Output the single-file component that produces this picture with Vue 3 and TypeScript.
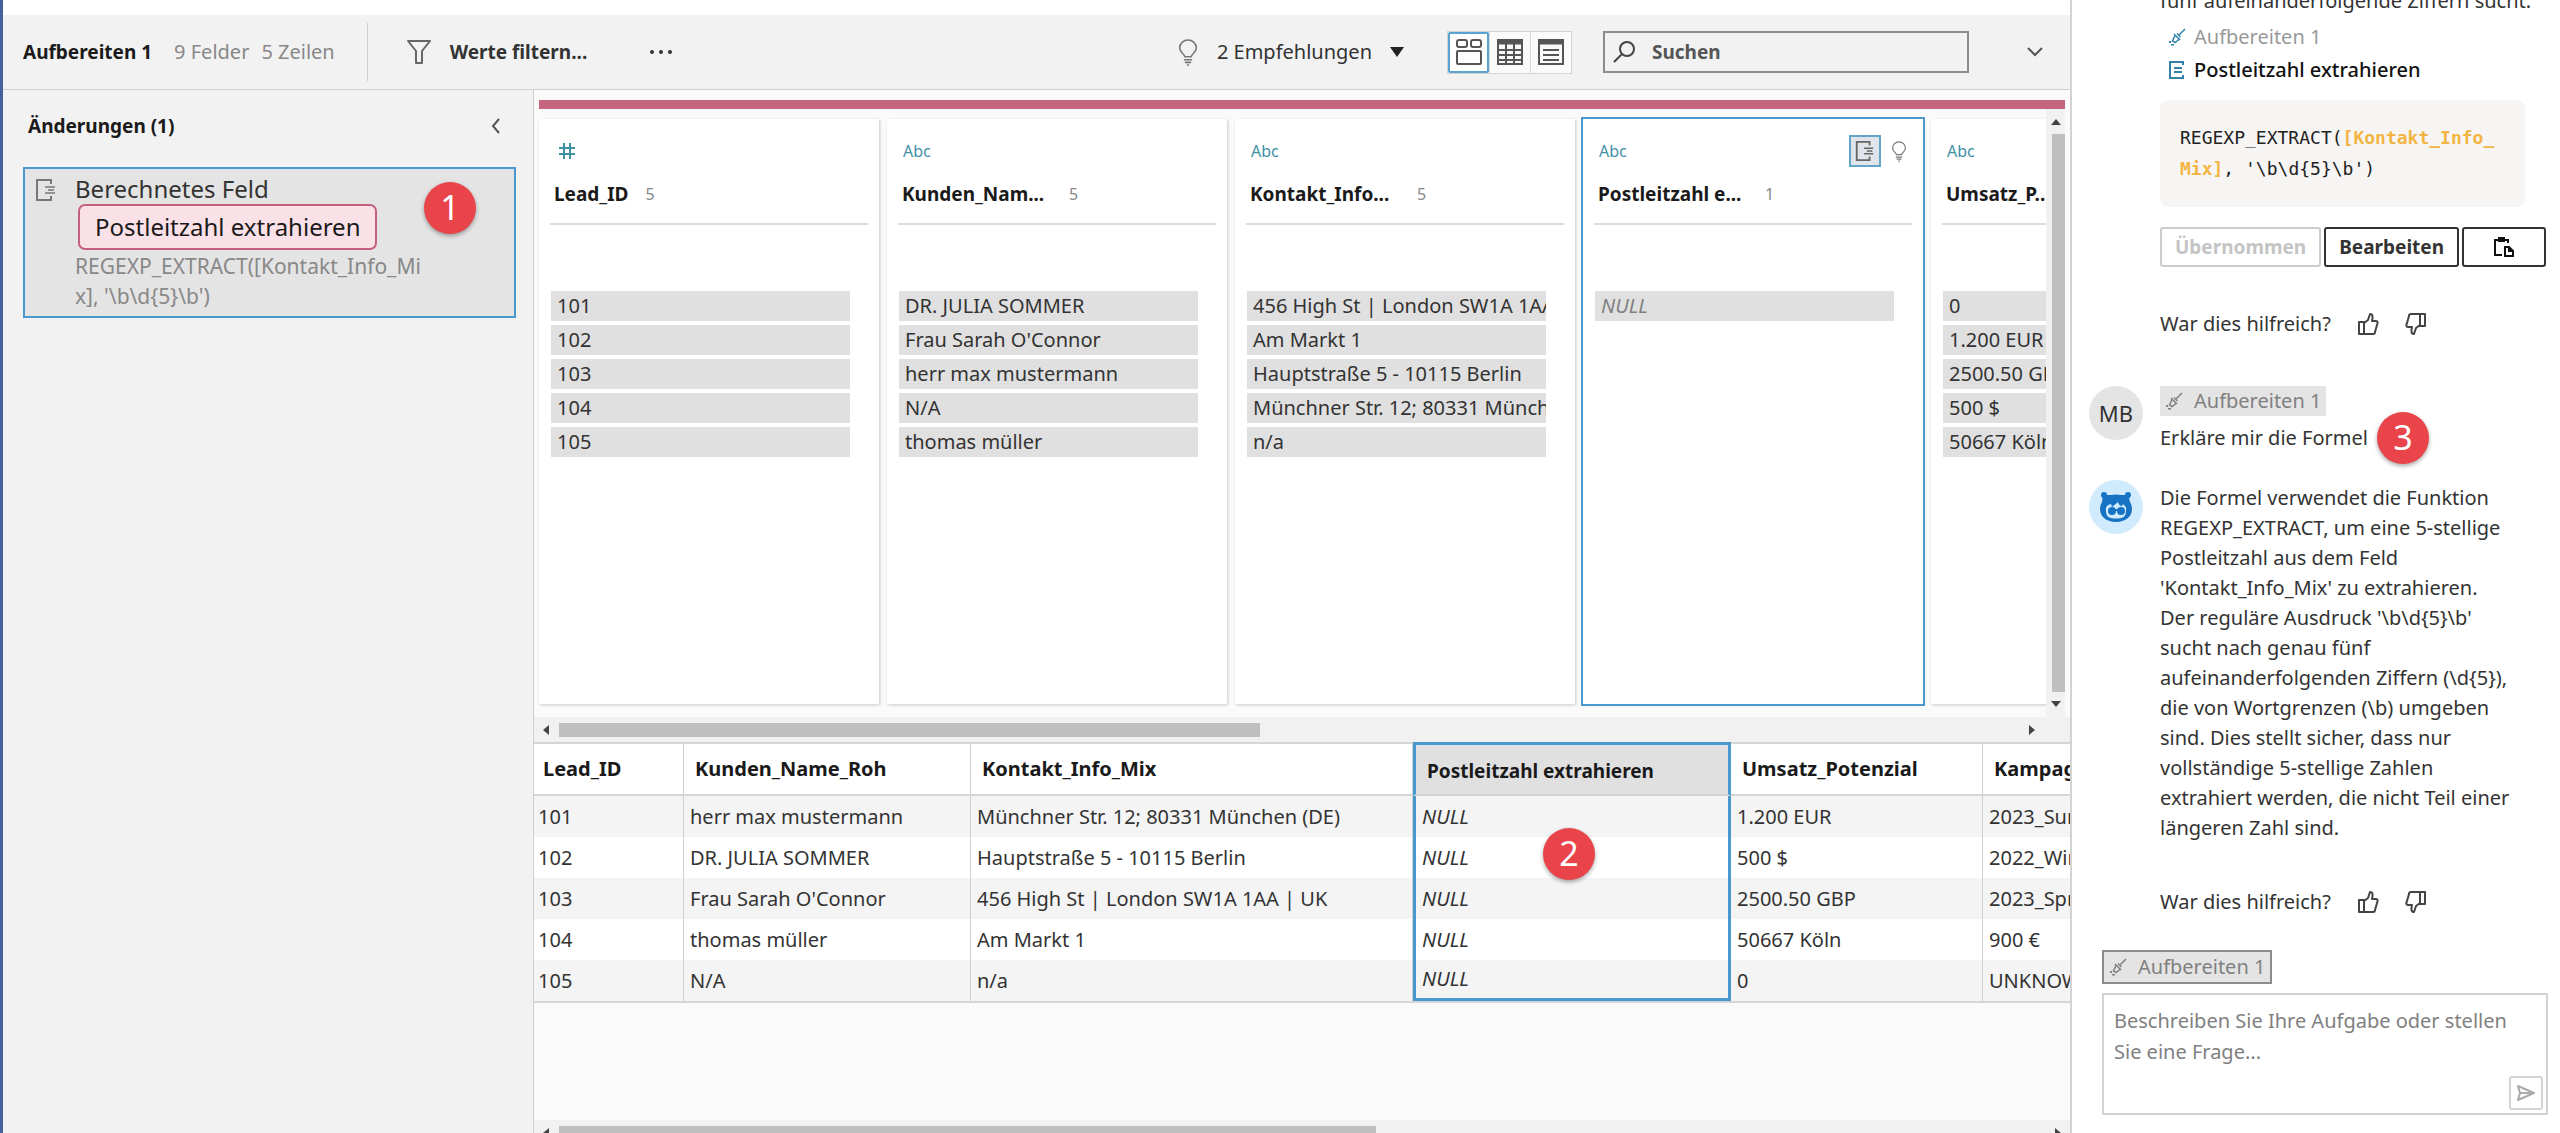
<script setup lang="ts">
interface Profile {
  title: string
  type: 'number' | 'text'
  count: number
  values: string[]
  selected?: boolean
}

const profiles: Profile[] = [
  { title: 'Lead_ID', type: 'number', count: 5, values: ['101', '102', '103', '104', '105'] },
  {
    title: 'Kunden_Nam...',
    type: 'text',
    count: 5,
    values: ['DR. JULIA SOMMER', "Frau Sarah O'Connor", 'herr max mustermann', 'N/A', 'thomas müller'],
  },
  {
    title: 'Kontakt_Info...',
    type: 'text',
    count: 5,
    values: [
      '456 High St | London SW1A 1AA | UK',
      'Am Markt 1',
      'Hauptstraße 5 - 10115 Berlin',
      'Münchner Str. 12; 80331 München (DE)',
      'n/a',
    ],
  },
  { title: 'Postleitzahl e...', type: 'text', count: 1, values: ['NULL'], selected: true },
  { title: 'Umsatz_P...', type: 'text', count: 5, values: ['0', '1.200 EUR', '2500.50 GBP', '500 $', '50667 Köln'] },
]

const columns: string[] = [
  'Lead_ID',
  'Kunden_Name_Roh',
  'Kontakt_Info_Mix',
  'Postleitzahl extrahieren',
  'Umsatz_Potenzial',
  'Kampagne_ID',
]

const selectedColumn = 3

const rows: string[][] = [
  ['101', 'herr max mustermann', 'Münchner Str. 12; 80331 München (DE)', 'NULL', '1.200 EUR', '2023_Summer'],
  ['102', 'DR. JULIA SOMMER', 'Hauptstraße 5 - 10115 Berlin', 'NULL', '500 $', '2022_Winter'],
  ['103', "Frau Sarah O'Connor", '456 High St | London SW1A 1AA | UK', 'NULL', '2500.50 GBP', '2023_Spring'],
  ['104', 'thomas müller', 'Am Markt 1', 'NULL', '50667 Köln', '900 €'],
  ['105', 'N/A', 'n/a', 'NULL', '0', 'UNKNOWN'],
]
</script>

<template>
  <div class="app">
    <svg class="sprite" aria-hidden="true">
      <symbol id="i-calc" viewBox="0 0 24 24">
        <path d="M17 6V2H3v20h14v-4" fill="none" stroke="currentColor" stroke-width="2" />
        <path d="M11 9h10M14 12h6M11 15h10" fill="none" stroke="currentColor" stroke-width="1.500" />
      </symbol>
      <symbol id="i-field" viewBox="0 0 16 18">
        <path d="M15 4V1H2v16h13v-3M6 7h8M6 11h8" fill="none" stroke="currentColor" stroke-width="2" />
      </symbol>
      <symbol id="i-brush" viewBox="0 0 18 18">
        <path d="M17 1l-6 6M6 6l6 6M7 7.500l-2.500 5.500 2.500 1.500 4-3" fill="none" stroke="currentColor" stroke-width="1.500" />
        <path d="M9 5.500l3.500 3.500" stroke="currentColor" stroke-width="1.500" />
        <path d="M1 13h2v2H1zM3 16h3v1.500H3z" fill="currentColor" />
      </symbol>
      <symbol id="i-bulb" viewBox="0 0 20 26">
        <path d="M7 17C6 14 2 13 2 8.500a8 7.500 0 0 1 16 0C18 13 14 14 13 17z" fill="none" stroke="currentColor" stroke-width="1.500" />
        <path d="M6 20h8M7 22.500h6M9 25h2" fill="none" stroke="currentColor" stroke-width="1.500" />
      </symbol>
      <symbol id="i-thumb" viewBox="0 0 22 22">
        <path
          d="M2 9h5v12H2zM7 10l4-3 2-6c3 0 3 3 2 7h4c2 0 2 2 1 4l-2 7c0 1-1 2-2 2H7"
          fill="none"
          stroke="currentColor"
          stroke-width="2"
          stroke-linejoin="round"
        />
      </symbol>
    </svg>

    <main class="workspace">
      <header class="toolbar">
        <div class="summary">
          <strong>Aufbereiten 1</strong>
          <span>9 Felder</span>
          <span>5 Zeilen</span>
        </div>
        <button class="plain filter" type="button">
          <svg width="26" height="26" viewBox="0 0 26 26"><path d="M2 2h22L16 12v12h-6V12z" fill="none" stroke="#666" stroke-width="2" stroke-linejoin="round" /></svg>
          Werte filtern...
        </button>
        <button class="plain more" type="button" aria-label="Mehr">
          <svg width="24" height="6" viewBox="0 0 24 6" fill="#333"><circle cx="3" cy="3" r="2" /><circle cx="12" cy="3" r="2" /><circle cx="21" cy="3" r="2" /></svg>
        </button>
        <button class="plain hints" type="button">
          <svg class="grey" width="22" height="27"><use href="#i-bulb" /></svg>
          2 Empfehlungen
          <svg class="caret" width="14" height="10" viewBox="0 0 14 10"><path d="M0 0h14L7 10z" fill="#222" /></svg>
        </button>
        <div class="views">
          <button type="button" class="active" aria-label="Profil">
            <svg width="28" height="28" viewBox="0 0 28 28" fill="none" stroke="#555" stroke-width="2"><rect x="2" y="2" width="10" height="7" rx="2" /><rect x="16" y="2" width="10" height="7" rx="2" /><rect x="2" y="13" width="24" height="13" rx="1" /></svg>
          </button>
          <button type="button" aria-label="Raster">
            <svg width="28" height="28" viewBox="0 0 28 28" fill="none" stroke="#555" stroke-width="2"><path d="M2 2h24v24H2zM2 12h24M2 17h24M2 22h24M10 5v21M18 5v21" /><path d="M2 4h24" stroke-width="5" /></svg>
          </button>
          <button type="button" aria-label="Liste">
            <svg width="28" height="28" viewBox="0 0 28 28" fill="none" stroke="#555" stroke-width="2"><path d="M2 2h24v24H2zM6 12h16M6 17h16M6 22h16" /><path d="M2 4h24" stroke-width="5" /></svg>
          </button>
        </div>
        <label class="search">
          <svg width="24" height="24" viewBox="0 0 24 24" fill="none" stroke="#444" stroke-width="2"><circle cx="15" cy="9" r="7" /><path d="M10 14l-8 8" /></svg>
          <input type="search" placeholder="Suchen" aria-label="Suchen" />
        </label>
        <button class="plain collapse" type="button" aria-label="Einklappen">
          <svg width="16" height="10" viewBox="0 0 16 10"><path d="M1 1l7 7 7-7" fill="none" stroke="#555" stroke-width="2" /></svg>
        </button>
      </header>

      <div class="body">
        <aside class="changes">
          <div class="changes-head">
            <h2>Änderungen (1)</h2>
            <button class="plain" type="button" aria-label="Bereich schließen">
              <svg width="10" height="16" viewBox="0 0 10 16"><path d="M8 1L2 8l6 7" fill="none" stroke="#555" stroke-width="2" /></svg>
            </button>
          </div>
          <article class="change">
            <svg class="grey" width="24" height="24"><use href="#i-calc" /></svg>
            <div class="change-text">
              <div class="change-kind">Berechnetes Feld</div>
              <span class="chip">Postleitzahl extrahieren</span>
              <div class="formula">REGEXP_EXTRACT([Kontakt_Info_Mix], '\b\d{5}\b')</div>
            </div>
            <span class="marker marker-one">1</span>
          </article>
        </aside>

        <section class="data">
          <div class="step-bar"></div>
          <div class="profile-pane">
            <div class="cards">
              <article v-for="p in profiles" :key="p.title" class="card" :class="{ selected: p.selected }">
                <div class="card-type">
                  <svg v-if="p.type === 'number'" class="hash" width="18" height="18" viewBox="0 0 18 18"><path d="M6 1v16M12 1v16M1 6h16M1 12h16" fill="none" stroke="#3f8fa6" stroke-width="2" /></svg>
                  <span v-else>Abc</span>
                  <span v-if="p.selected" class="card-tools">
                    <button type="button" class="calc-button" aria-label="Berechnung anzeigen"><svg width="22" height="22"><use href="#i-calc" /></svg></button>
                    <svg class="grey" width="16" height="21"><use href="#i-bulb" /></svg>
                  </span>
                </div>
                <div class="card-title">
                  <h3 :class="{ wide: p.type === 'text' }">{{ p.title }}</h3>
                  <span>{{ p.count }}</span>
                </div>
                <ul>
                  <li v-for="v in p.values" :key="v" :class="{ empty: v === 'NULL' }">{{ v }}</li>
                </ul>
              </article>
            </div>
            <div class="v-scroll">
              <svg width="10" height="6" viewBox="0 0 10 6"><path d="M0 6h10L5 0z" fill="#444" /></svg>
              <div class="v-thumb"></div>
              <svg width="10" height="6" viewBox="0 0 10 6"><path d="M0 0h10L5 6z" fill="#444" /></svg>
            </div>
          </div>
          <div class="h-scroll">
            <svg width="6" height="10" viewBox="0 0 6 10"><path d="M6 0v10L0 5z" fill="#444" /></svg>
            <div class="h-track"><div class="h-thumb"></div></div>
            <svg width="6" height="10" viewBox="0 0 6 10"><path d="M0 0v10l6-5z" fill="#444" /></svg>
          </div>

          <div class="table-pane">
            <table>
              <colgroup>
                <col class="c-id" /><col class="c-name" /><col class="c-contact" /><col class="c-zip" /><col class="c-value" /><col class="c-campaign" />
              </colgroup>
              <thead>
                <tr>
                  <th v-for="(c, i) in columns" :key="c" scope="col" :class="{ picked: i === selectedColumn }">{{ c }}</th>
                </tr>
              </thead>
              <tbody>
                <tr v-for="r in rows" :key="r[0]">
                  <td v-for="(v, i) in r" :key="i" :class="{ picked: i === selectedColumn }">{{ v }}</td>
                </tr>
              </tbody>
            </table>
            <span class="marker marker-two">2</span>
          </div>
          <div class="h-scroll bottom">
            <svg width="6" height="10" viewBox="0 0 6 10"><path d="M6 0v10L0 5z" fill="#444" /></svg>
            <div class="h-track"><div class="h-thumb"></div></div>
            <svg width="6" height="10" viewBox="0 0 6 10"><path d="M0 0v10l6-5z" fill="#444" /></svg>
          </div>
        </section>
      </div>
    </main>

    <aside class="chat">
      <div class="messages">
        <div class="answer">
          <p class="tail">fünf aufeinanderfolgende Ziffern sucht.</p>
          <div class="ref-line muted"><svg class="blue" width="18" height="18"><use href="#i-brush" /></svg>Aufbereiten 1</div>
          <div class="ref-line strong"><svg class="blue" width="16" height="18"><use href="#i-field" /></svg>Postleitzahl extrahieren</div>
          <pre class="code"><code>REGEXP_EXTRACT(<b>[Kontakt_Info_</b>
<b>Mix]</b>, '\b\d{5}\b')</code></pre>
          <div class="actions">
            <button type="button" disabled>Übernommen</button>
            <button type="button">Bearbeiten</button>
            <button type="button" class="copy" aria-label="Kopieren">
              <svg width="22" height="22" viewBox="0 0 22 22" fill="none" stroke="#111" stroke-width="2"><path d="M9 19H2V4h3M12 4h3v3" /><path d="M6 2h5v3H6z" fill="#111" /><path d="M12 11h4l4 4v5h-8zM16 11v4h4" /></svg>
            </button>
          </div>
          <div class="feedback">
            War dies hilfreich?
            <button class="plain" type="button" aria-label="Ja"><svg width="22" height="22"><use href="#i-thumb" /></svg></button>
            <button class="plain down" type="button" aria-label="Nein"><svg width="22" height="22"><use href="#i-thumb" /></svg></button>
          </div>
        </div>

        <div class="message">
          <span class="avatar">MB</span>
          <div>
            <span class="tag"><svg width="18" height="18"><use href="#i-brush" /></svg>Aufbereiten 1</span>
            <p class="question">Erkläre mir die Formel<span class="marker marker-three">3</span></p>
          </div>
        </div>

        <div class="message reply">
          <span class="avatar bot">
            <svg width="34" height="32" viewBox="0 0 34 32">
              <circle cx="5" cy="4" r="3" fill="#1673c4" /><circle cx="29" cy="4" r="3" fill="#1673c4" />
              <path d="M4 4l8 0q5-1 10 0l8 0q0 4 1 7 2 3 2 7c0 8-7 13-16 13S1 26 1 18q0-4 2-7z" fill="#1673c4" />
              <path d="M7 20q-1-6 5-7l1 3 6-5q1 4 4 4l1-2q4 3 3 7 0 6-5 7-5 1-10 0-5-1-5-7z" fill="#d0ebfd" />
              <circle cx="13" cy="20" r="4" fill="#1673c4" /><circle cx="22" cy="20" r="4" fill="#1673c4" />
              <path d="M14 19h8" stroke="#1673c4" stroke-width="2" fill="none" />
            </svg>
          </span>
          <div>
            <p class="text">
              Die Formel verwendet die Funktion REGEXP_EXTRACT, um eine 5-stellige Postleitzahl aus dem Feld
              'Kontakt_Info_Mix' zu extrahieren. Der reguläre Ausdruck '\b\d{5}\b' sucht nach genau fünf
              aufeinanderfolgenden Ziffern (\d{5}), die von Wortgrenzen (\b) umgeben sind. Dies stellt sicher, dass nur
              vollständige 5-stellige Zahlen extrahiert werden, die nicht Teil einer längeren Zahl sind.
            </p>
            <div class="feedback">
              War dies hilfreich?
              <button class="plain" type="button" aria-label="Ja"><svg width="22" height="22"><use href="#i-thumb" /></svg></button>
              <button class="plain down" type="button" aria-label="Nein"><svg width="22" height="22"><use href="#i-thumb" /></svg></button>
            </div>
          </div>
        </div>
      </div>

      <form class="composer" @submit.prevent>
        <button class="tag outlined" type="button"><svg width="18" height="18"><use href="#i-brush" /></svg>Aufbereiten 1</button>
        <div class="prompt">
          <textarea aria-label="Nachricht" placeholder="Beschreiben Sie Ihre Aufgabe oder stellen Sie eine Frage..."></textarea>
          <button class="send" type="submit" aria-label="Senden">
            <svg width="20" height="18" viewBox="0 0 20 18"><path d="M2 2l16 7-16 7 2-7zM4 9h14" fill="none" stroke="#aaa" stroke-width="2" stroke-linejoin="round" /></svg>
          </button>
        </div>
      </form>
    </aside>
  </div>
</template>

<style>
body {
  background: #fff;
}
</style>

<style scoped>
* {
  box-sizing: border-box;
}
.app {
  display: flex;
  height: 100vh;
  overflow: hidden;
  border-left: 3px solid #45619c;
  font-family: 'Noto Sans', 'Open Sans', sans-serif;
  font-size: 20px;
  line-height: 30px;
  color: #333;
}
.sprite {
  position: absolute;
  width: 0;
  height: 0;
}
svg {
  display: block;
  flex: none;
}
h2,
h3,
p,
ul,
pre {
  margin: 0;
  padding: 0;
}
button,
input,
textarea {
  font: inherit;
  color: inherit;
}
.plain {
  display: flex;
  align-items: center;
  padding: 0;
  border: 0;
  background: none;
}
.grey {
  color: #777;
}
.blue {
  color: #3380a8;
}
.marker {
  position: absolute;
  width: 52px;
  height: 52px;
  border-radius: 50%;
  background: #e8444a;
  box-shadow: 0 2px 4px rgba(0, 0, 0, 0.35);
  color: #fff;
  font-size: 34px;
  line-height: 50px;
  text-align: center;
}

/* Workspace and toolbar */
.workspace {
  display: flex;
  flex: 1;
  flex-direction: column;
  min-width: 0;
  padding-top: 15px;
}
.toolbar {
  display: flex;
  flex: none;
  align-items: center;
  height: 75px;
  padding: 0 27px 0 20px;
  border-bottom: 1px solid #cfcfcf;
  background: #f2f2f2;
  font-size: 20px;
}
.summary {
  display: flex;
  align-items: center;
  height: 58px;
  padding-right: 32px;
  border-right: 1px solid #cfcfcf;
  color: #888;
}
.summary strong {
  margin-right: 22px;
  color: #1a1a1a;
  font-size: 19px;
}
.summary span + span {
  margin-left: 12px;
}
.filter {
  gap: 18px;
  margin-left: 38px;
  font-size: 19px;
  font-weight: 700;
}
.more {
  margin-left: 62px;
}
.hints {
  gap: 18px;
  margin-left: auto;
}
.views {
  display: flex;
  margin-left: 43px;
  border: 1px solid #d3d3d3;
  background: #fafafa;
}
.views button {
  display: grid;
  place-items: center;
  width: 41px;
  height: 41px;
  padding: 0;
  border: 0;
  border-left: 1px solid #d8d8d8;
  background: none;
}
.views .active {
  border: 2px solid #58a3cf;
  border-radius: 2px;
  background: #fff;
}
.search {
  display: flex;
  align-items: center;
  gap: 16px;
  width: 366px;
  height: 42px;
  margin-left: 31px;
  padding: 0 7px;
  border: 2px solid #8c8c8c;
}
.search input {
  flex: 1;
  min-width: 0;
  padding: 0;
  border: 0;
  outline: 0;
  background: none;
  font-size: 19px;
  font-weight: 700;
}
.search input::placeholder {
  color: #555;
  opacity: 1;
}
.collapse {
  margin-left: 58px;
}

/* Change list */
.body {
  display: flex;
  flex: 1;
  min-height: 0;
}
.changes {
  flex: none;
  width: 531px;
  padding: 21px 17px 0 20px;
  border-right: 1px solid #cfcfcf;
  background: #f2f2f2;
}
.changes-head {
  display: flex;
  align-items: center;
  justify-content: space-between;
  padding: 0 15px 0 5px;
  color: #1a1a1a;
}
.changes-head h2 {
  font-size: 19px;
}
.change {
  position: relative;
  display: flex;
  gap: 17px;
  margin-top: 26px;
  padding: 5px 9px;
  border: 2px solid #4a98cf;
  background: #e4e4e4;
}
.change > svg {
  margin-top: 4px;
}
.change-text {
  width: 364px;
}
.change-kind {
  font-size: 24px;
}
.chip {
  display: inline-block;
  margin-left: 3px;
  padding: 6px 15px;
  border: 2px solid #c5607c;
  border-radius: 7px;
  background: #fae1e7;
  color: #1a1a1a;
  font-size: 24px;
  vertical-align: top;
}
.formula {
  padding-top: 1px;
  color: #888;
  font-size: 21px;
  word-break: break-all;
}
.marker-one {
  top: 13px;
  right: 38px;
}

/* Profile cards */
.data {
  display: flex;
  flex: 1;
  flex-direction: column;
  min-width: 0;
  padding-top: 10px;
  background: #fafafa;
}
.step-bar {
  flex: none;
  height: 9px;
  margin: 0 5px;
  background: #c5657f;
}
.profile-pane {
  display: flex;
  flex: none;
  height: 608px;
  padding-right: 5px;
}
.cards {
  display: flex;
  flex: 1;
  gap: 8px;
  min-width: 0;
  padding: 10px 0 13px 5px;
  overflow: hidden;
}
.card {
  flex: none;
  width: 340px;
  padding: 17px 0 0;
  background: #fff;
  box-shadow: 1px 1px 3px rgba(0, 0, 0, 0.2);
}
.card.selected {
  outline: 2px solid #4a98cf;
}
.card-type {
  display: flex;
  align-items: center;
  height: 30px;
  padding: 0 16px;
  color: #3f8fa6;
  font-size: 16px;
}
.hash {
  margin-left: 3px;
}
.card-tools {
  display: flex;
  align-items: center;
  gap: 10px;
  margin-left: auto;
}
.calc-button {
  display: grid;
  place-items: center;
  width: 32px;
  height: 32px;
  padding: 0;
  border: 2px solid #62a5c6;
  background: #e0e5eb;
  color: #666;
}
.card-title {
  display: flex;
  align-items: center;
  gap: 17px;
  margin: 13px 11px 0;
  padding: 0 0 14px 4px;
  border-bottom: 2px solid #dcdcdc;
  color: #888;
  font-size: 16px;
}
.card-title h3 {
  color: #1a1a1a;
  font-size: 19px;
}
.card-title .wide {
  width: 150px;
}
ul {
  display: grid;
  gap: 4px;
  width: 299px;
  margin: 66px 0 0 12px;
  list-style: none;
}
li {
  padding-left: 6px;
  overflow: hidden;
  background: #e0e0e0;
  white-space: nowrap;
}
.empty {
  color: #808080;
  font-style: italic;
}
.v-scroll {
  display: flex;
  flex: none;
  flex-direction: column;
  align-items: center;
  gap: 9px;
  width: 19px;
  padding: 10px 0;
  background: #f1f1f1;
}
.v-thumb {
  flex: 1;
  align-self: flex-end;
  width: 13px;
  background: #bfbfbf;
}
.h-scroll {
  display: flex;
  flex: none;
  align-items: center;
  gap: 10px;
  height: 25px;
  padding: 0 35px 0 9px;
  background: #f1f1f1;
}
.h-track {
  flex: 1;
}
.h-thumb {
  width: 48%;
  height: 14px;
  background: #bfbfbf;
}
.h-scroll.bottom {
  padding-right: 9px;
  margin-bottom: -12px;
}
.bottom .h-thumb {
  width: 55%;
}

/* Data grid */
.table-pane {
  position: relative;
  flex: 1;
  min-height: 0;
  overflow: hidden;
}
table {
  width: 1711px;
  border-spacing: 0;
  table-layout: fixed;
  border-bottom: 2px solid #d5d5d5;
}
.c-id {
  width: 150px;
}
.c-name {
  width: 287px;
}
.c-contact {
  width: 442px;
}
.c-zip {
  width: 318px;
}
.c-value {
  width: 252px;
}
.c-campaign {
  width: 262px;
}
th,
td {
  overflow: hidden;
  border-right: 1px solid #d0d0d0;
  text-align: left;
  white-space: nowrap;
}
th {
  height: 54px;
  padding: 0 0 0 11px;
  border-top: 2px solid #d5d5d5;
  border-bottom: 2px solid #d5d5d5;
  background: #fff;
  color: #1a1a1a;
}
td {
  height: 41px;
  padding: 0 0 0 6px;
  background: #fff;
}
tr:nth-child(odd) td {
  background: #f4f4f4;
}
th:first-child {
  padding-left: 9px;
}
td:first-child {
  padding-left: 4px;
}
.picked {
  border-right: 3px solid #4a98cf;
  border-left: 3px solid #4a98cf;
}
th.picked {
  padding-top: 3px;
  border-top: 3px solid #4a98cf;
  background: #e0e0e1;
  font-size: 19px;
}
td.picked {
  font-style: italic;
}
tr:last-child td.picked {
  border-bottom: 3px solid #4a98cf;
}
.marker-two {
  top: 86px;
  left: 1009px;
}

/* Chat */
.chat {
  display: flex;
  flex: none;
  flex-direction: column;
  width: 490px;
  border-left: 2px solid #d3d3d3;
  background: #fff;
}
.messages {
  display: flex;
  flex: 1;
  flex-direction: column;
  justify-content: flex-end;
  min-height: 0;
  padding: 0 14px 33px 17px;
  overflow: hidden;
}
.answer {
  margin: 0 0 47px 71px;
}
.tail {
  margin-bottom: 6px;
  white-space: nowrap;
}
.ref-line {
  display: grid;
  grid-template-columns: 26px 1fr;
  align-items: center;
  padding-left: 8px;
}
.muted {
  margin-bottom: 3px;
  color: #999;
}
.strong {
  color: #111;
  font-weight: 500;
}
.code {
  width: 365px;
  margin-top: 15px;
  padding: 22px 0 23px 20px;
  border-radius: 8px;
  background: #f7f5f4;
  color: #222;
  font-family: 'DejaVu Sans Mono', 'Liberation Mono', monospace;
  font-size: 18px;
  line-height: 31px;
}
.code code {
  font: inherit;
}
.code b {
  color: #f2b544;
}
.actions {
  display: flex;
  gap: 3px;
  margin-top: 20px;
}
.actions button {
  height: 40px;
  padding: 0 13px;
  border: 2px solid #333;
  border-radius: 3px;
  background: #fff;
  font-size: 19px;
  font-weight: 700;
}
.actions button:disabled {
  border-color: #ccc;
  color: #c4c4c4;
}
.actions .copy {
  display: grid;
  flex: 1;
  place-items: center;
}
.feedback {
  display: flex;
  align-items: center;
  margin-top: 42px;
}
.feedback .plain {
  margin-left: 26px;
  color: #444;
}
.reply .feedback {
  margin-top: 44px;
}
.feedback .down {
  transform: rotate(180deg);
}
.message {
  display: flex;
  align-items: flex-start;
  gap: 17px;
}
.avatar {
  display: grid;
  flex: none;
  place-items: center;
  width: 54px;
  height: 54px;
  border-radius: 50%;
  background: #e4e4e4;
  font-size: 22px;
}
.bot {
  background: #d0ebfd;
}
.tag {
  display: flex;
  align-items: center;
  gap: 11px;
  width: max-content;
  height: 30px;
  padding: 0 5px;
  background: #e4e4e4;
  color: #808080;
}
.question {
  position: relative;
  width: max-content;
  margin-top: 7px;
}
.marker-three {
  top: -11px;
  left: 100%;
  margin-left: 9px;
}
.reply {
  margin-top: 27px;
}
.text {
  width: 354px;
  padding-top: 3px;
}
.composer {
  padding: 0 12px 18px 30px;
}
.outlined {
  height: 34px;
  border: 2px solid #8c8c8c;
}
.prompt {
  position: relative;
  margin-top: 9px;
}
.prompt textarea {
  display: block;
  width: 100%;
  height: 122px;
  padding: 10px 10px;
  border: 2px solid #d3d3d3;
  outline: 0;
  background: #fff;
  line-height: 31px;
  resize: none;
}
.prompt textarea::placeholder {
  color: #808080;
  opacity: 1;
}
.send {
  position: absolute;
  right: 5px;
  bottom: 5px;
  display: grid;
  place-items: center;
  width: 34px;
  height: 34px;
  padding: 0;
  border: 2px solid #d3d3d3;
  border-radius: 3px;
  background: #fff;
}
</style>
